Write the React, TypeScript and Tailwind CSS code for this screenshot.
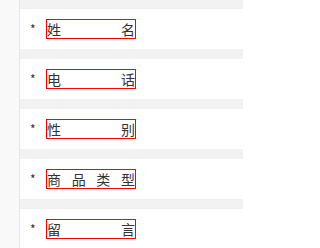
import React from "react";

const rows = ["姓名", "电话", "性别", "商品类型", "留言"];

export default function App() {
  return (
    <div className="flex h-[248px] w-[243px] overflow-hidden bg-[#f2f2f2] font-['Noto_Sans_CJK_SC',sans-serif] text-[#333]">
      <div className="w-[20px] shrink-0 border-r border-[#e8e8e8] bg-[#f9f9f9]" />
      <div className="flex flex-1 flex-col gap-[10px] pt-[9px]">
        {rows.map((r) => (
          <div key={r} className="flex h-[40px] shrink-0 items-center bg-white pl-[10px]">
            <span className="w-[16px] text-[12px] leading-none">*</span>
            <div className="h-[20px] w-[90px] border border-[#ff0000] text-[14px] leading-[18px] [text-align-last:justify]">
              {r}
            </div>
          </div>
        ))}
      </div>
    </div>
  );
}
